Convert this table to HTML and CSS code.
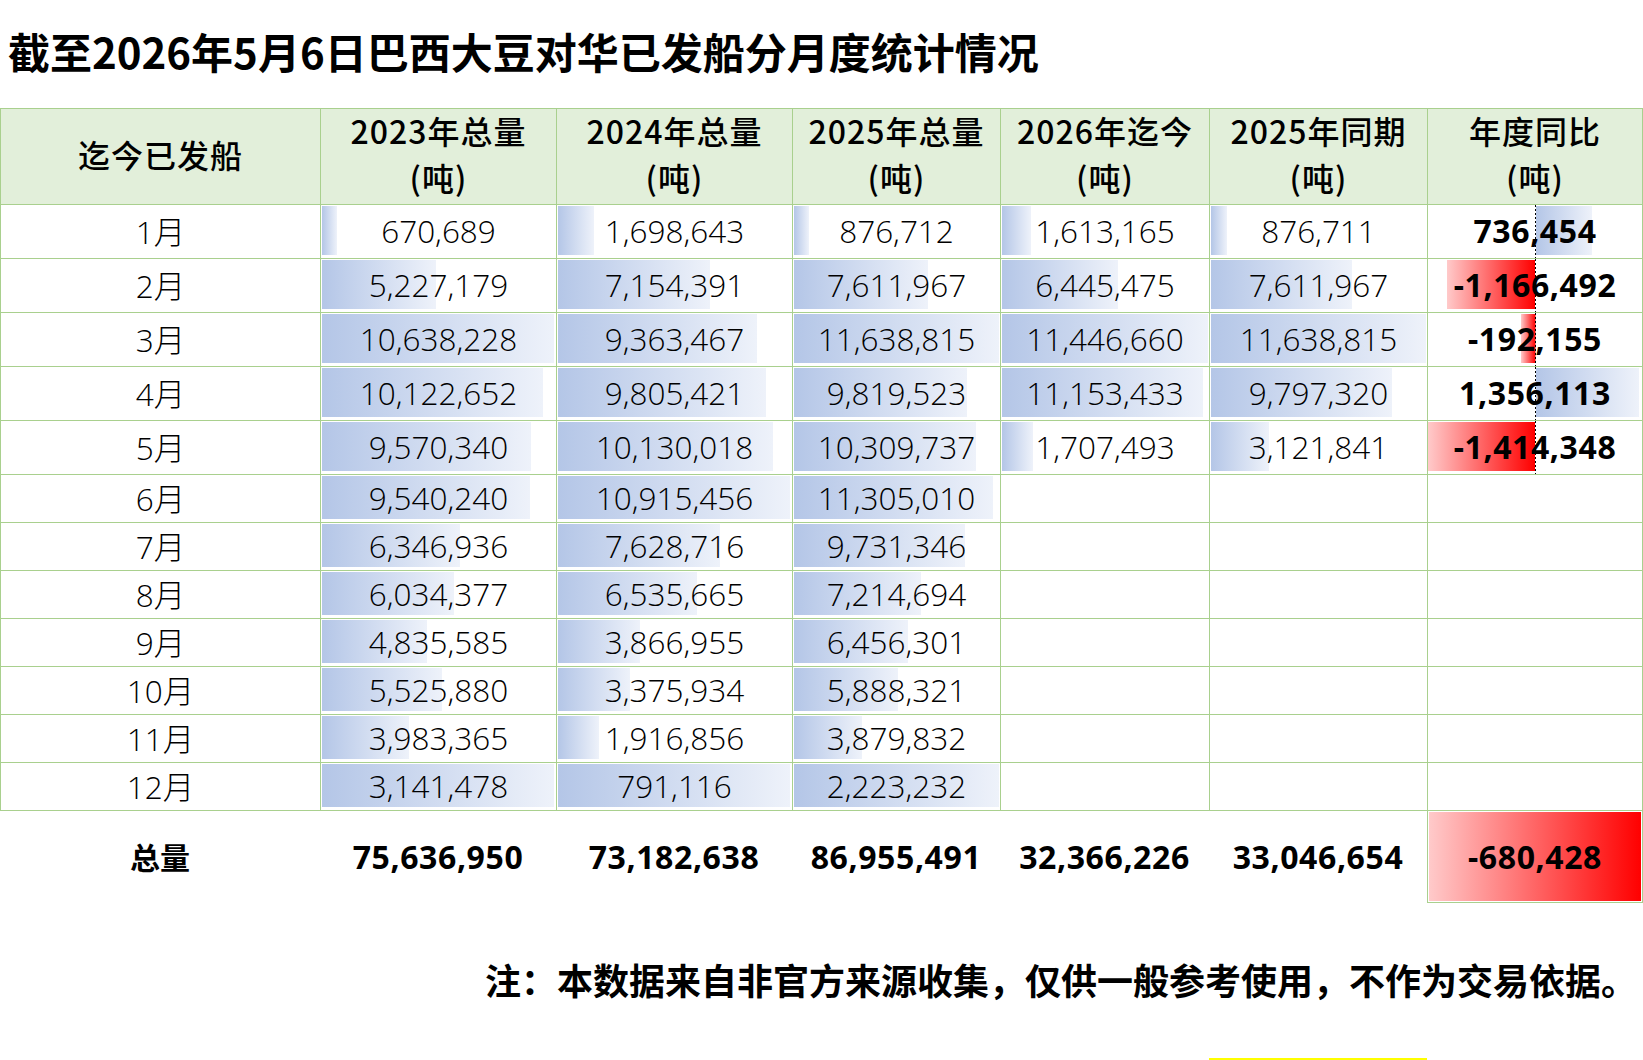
FILE: index.html
```html
<!DOCTYPE html>
<html lang="zh-CN">
<head>
<meta charset="utf-8">
<title>巴西大豆对华已发船分月度统计</title>
<link rel="stylesheet" href="styles.css">
</head>
<body>
<div class="title">截至2026年5月6日巴西大豆对华已发船分月度统计情况</div>
<div class="grid">
  <div class="c h hl">迄今已发船</div>
  <div class="c h">2023年总量<br>(吨)</div>
  <div class="c h">2024年总量<br>(吨)</div>
  <div class="c h">2025年总量<br>(吨)</div>
  <div class="c h">2026年迄今<br>(吨)</div>
  <div class="c h">2025年同期<br>(吨)</div>
  <div class="c h last">年度同比<br>(吨)</div>

  <div class="c lab">1月</div>
  <div class="c n bar" style="--w:15px">670,689</div>
  <div class="c n bar" style="--w:36px">1,698,643</div>
  <div class="c n bar" style="--w:15px">876,712</div>
  <div class="c n bar" style="--w:29px">1,613,165</div>
  <div class="c n bar" style="--w:16px">876,711</div>
  <div class="c n b last pos" style="--w:56px">736,454</div>

  <div class="c lab">2月</div>
  <div class="c n bar" style="--w:114px">5,227,179</div>
  <div class="c n bar" style="--w:152px">7,154,391</div>
  <div class="c n bar" style="--w:134px">7,611,967</div>
  <div class="c n bar" style="--w:116px">6,445,475</div>
  <div class="c n bar" style="--w:141px">7,611,967</div>
  <div class="c n b last neg" style="--x:19px;--w:88px">-1,166,492</div>

  <div class="c lab">3月</div>
  <div class="c n bar" style="--w:232px">10,638,228</div>
  <div class="c n bar" style="--w:199px">9,363,467</div>
  <div class="c n bar" style="--w:205px">11,638,815</div>
  <div class="c n bar" style="--w:206px">11,446,660</div>
  <div class="c n bar" style="--w:215px">11,638,815</div>
  <div class="c n b last neg" style="--x:92.5px;--w:14.5px">-192,155</div>

  <div class="c lab">4月</div>
  <div class="c n bar" style="--w:221px">10,122,652</div>
  <div class="c n bar" style="--w:208px">9,805,421</div>
  <div class="c n bar" style="--w:173px">9,819,523</div>
  <div class="c n bar" style="--w:201px">11,153,433</div>
  <div class="c n bar" style="--w:181px">9,797,320</div>
  <div class="c n b last pos" style="--w:103px">1,356,113</div>

  <div class="c lab">5月</div>
  <div class="c n bar" style="--w:209px">9,570,340</div>
  <div class="c n bar" style="--w:215px">10,130,018</div>
  <div class="c n bar" style="--w:182px">10,309,737</div>
  <div class="c n bar" style="--w:31px">1,707,493</div>
  <div class="c n bar" style="--w:58px">3,121,841</div>
  <div class="c n b last neg" style="--x:0px;--w:107px">-1,414,348</div>

  <div class="c lab">6月</div>
  <div class="c n bar" style="--w:208px">9,540,240</div>
  <div class="c n bar" style="--w:232px">10,915,456</div>
  <div class="c n bar" style="--w:199px">11,305,010</div>
  <div class="c"></div>
  <div class="c"></div>
  <div class="c last"></div>

  <div class="c lab">7月</div>
  <div class="c n bar" style="--w:138px">6,346,936</div>
  <div class="c n bar" style="--w:162px">7,628,716</div>
  <div class="c n bar" style="--w:171px">9,731,346</div>
  <div class="c"></div>
  <div class="c"></div>
  <div class="c last"></div>

  <div class="c lab">8月</div>
  <div class="c n bar" style="--w:132px">6,034,377</div>
  <div class="c n bar" style="--w:139px">6,535,665</div>
  <div class="c n bar" style="--w:127px">7,214,694</div>
  <div class="c"></div>
  <div class="c"></div>
  <div class="c last"></div>

  <div class="c lab">9月</div>
  <div class="c n bar" style="--w:105px">4,835,585</div>
  <div class="c n bar" style="--w:82px">3,866,955</div>
  <div class="c n bar" style="--w:114px">6,456,301</div>
  <div class="c"></div>
  <div class="c"></div>
  <div class="c last"></div>

  <div class="c lab">10月</div>
  <div class="c n bar" style="--w:120px">5,525,880</div>
  <div class="c n bar" style="--w:72px">3,375,934</div>
  <div class="c n bar" style="--w:104px">5,888,321</div>
  <div class="c"></div>
  <div class="c"></div>
  <div class="c last"></div>

  <div class="c lab">11月</div>
  <div class="c n bar" style="--w:87px">3,983,365</div>
  <div class="c n bar" style="--w:41px">1,916,856</div>
  <div class="c n bar" style="--w:68px">3,879,832</div>
  <div class="c"></div>
  <div class="c"></div>
  <div class="c last"></div>

  <div class="c lab end">12月</div>
  <div class="c n bar end" style="--w:232px">3,141,478</div>
  <div class="c n bar end" style="--w:232px">791,116</div>
  <div class="c n bar end" style="--w:205px">2,223,232</div>
  <div class="c end"></div>
  <div class="c end"></div>
  <div class="c last end"></div>

  <div class="t tl">总量</div>
  <div class="t tn">75,636,950</div>
  <div class="t tn">73,182,638</div>
  <div class="t tn">86,955,491</div>
  <div class="t tn">32,366,226</div>
  <div class="t tn">33,046,654</div>
  <div class="t tn tot">-680,428</div>
</div>
<div class="note">注：本数据来自非官方来源收集，仅供一般参考使用，不作为交易依据。</div>
<div class="mark"></div>
</body>
</html>
```

FILE: styles.css
```css
html, body {
  margin: 0;
  padding: 0;
  background: #ffffff;
}

body {
  width: 1643px;
  height: 1060px;
  overflow: hidden;
  color: #000000;
  font-family: "Noto Sans", "Noto Sans CJK SC", sans-serif;
}

.title {
  height: 108px;
  line-height: 102px;
  padding-left: 8px;
  font-family: "Noto Sans CJK SC", sans-serif;
  font-weight: 700;
  font-size: 42px;
  white-space: nowrap;
}

.grid {
  display: grid;
  grid-template-columns: 320px 236px 236px 208px 209px 218px 216px;
  grid-template-rows: 96px repeat(5, 54px) repeat(6, 48px) 49px 92px;
}

.c {
  box-sizing: border-box;
  border-left: 1px solid #a9d08e;
  border-top: 1px solid #a9d08e;
  display: flex;
  align-items: center;
  justify-content: center;
  text-align: center;
  white-space: nowrap;
  padding-bottom: 3px;
}

.c.last {
  border-right: 1px solid #a9d08e;
}

.c.end {
  border-bottom: 1px solid #a9d08e;
}

.h {
  background: #e2efda;
  font-family: "Noto Sans CJK SC", sans-serif;
  font-weight: 500;
  font-size: 32px;
  letter-spacing: 1px;
  line-height: 47px;
  padding-bottom: 5px;
}

.lab {
  font-family: "Open Sans", "Noto Sans", "Noto Sans CJK SC", sans-serif;
  font-weight: 300;
  font-size: 31.5px;
}

.n {
  font-family: "Open Sans", "Noto Sans", sans-serif;
  font-weight: 300;
  font-size: 31.5px;
}

.n.b {
  font-family: "Noto Sans", sans-serif;
  font-weight: 700;
  font-size: 32px;
  letter-spacing: 0.6px;
}

.bar {
  background-image: linear-gradient(90deg, #b4c6e7, #eef2fa);
  background-repeat: no-repeat;
  background-size: var(--w) calc(100% - 4px);
  background-position: 1px 1px;
}

.pos {
  background-image:
    repeating-linear-gradient(180deg, #000000 0 2px, transparent 2px 4px),
    linear-gradient(90deg, #b4c6e7, #eef2fa);
  background-repeat: no-repeat;
  background-size: 1px 100%, var(--w) calc(100% - 4px);
  background-position: 107px 0, 108px 1px;
}

.neg {
  background-image:
    repeating-linear-gradient(180deg, #000000 0 2px, transparent 2px 4px),
    linear-gradient(90deg, #ffcaca, #ff0000);
  background-repeat: no-repeat;
  background-size: 1px 100%, var(--w) calc(100% - 4px);
  background-position: 107px 0, var(--x) 1px;
}

.t {
  box-sizing: border-box;
  display: flex;
  align-items: center;
  justify-content: center;
  white-space: nowrap;
  font-weight: 700;
  padding-bottom: 2px;
}

.tl {
  font-family: "Noto Sans CJK SC", sans-serif;
  font-size: 30px;
}

.tn {
  font-size: 32px;
  letter-spacing: 0.6px;
}

.tot {
  border: 1px solid #a9d08e;
  border-top: none;
  padding: 1px;
  background-image: linear-gradient(90deg, #ffcaca, #ff0000);
  background-clip: content-box;
  background-origin: content-box;
}

.note {
  margin-top: 51px;
  line-height: 50px;
  height: 50px;
  padding-right: 6px;
  text-align: right;
  font-family: "Noto Sans CJK SC", sans-serif;
  font-weight: 700;
  font-size: 36px;
  white-space: nowrap;
}

.mark {
  margin-top: 54px;
  margin-left: 1209px;
  width: 218px;
  height: 2px;
  background: #ffff00;
}
```
